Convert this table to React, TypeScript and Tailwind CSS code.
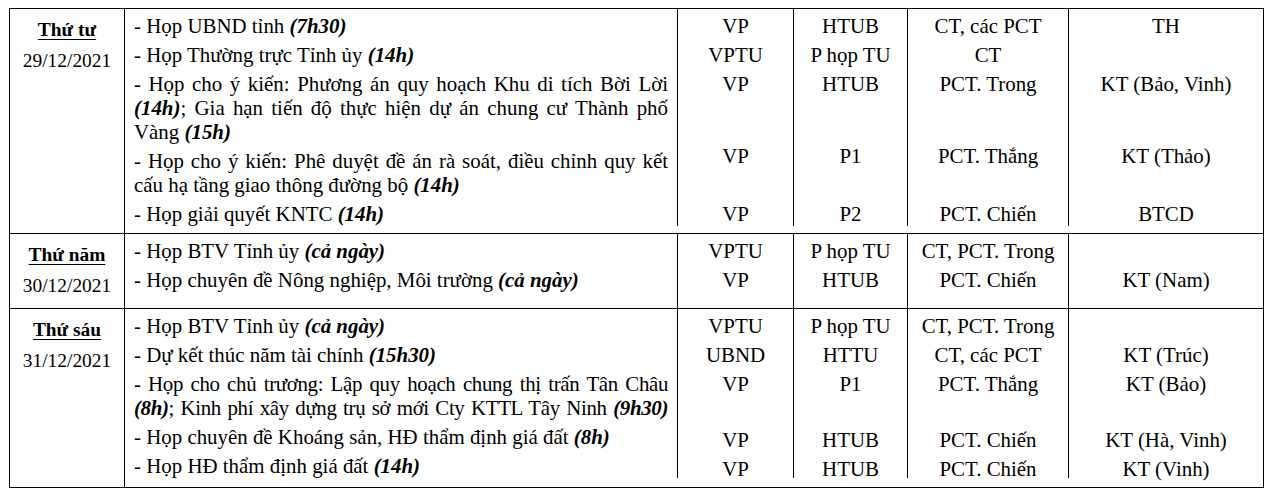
import React from "react";

type Seg = [string, boolean?];
type Item = {
  text: Seg[];
  cols: [string, string, string, string];
  justify?: boolean;
  tight?: boolean;
  shift?: "up" | "down";
};
type Group = { day: string; date: string; items: Item[]; lastPad: string };

const groups: Group[] = [
  {
    day: "Thứ tư",
    date: "29/12/2021",
    lastPad: "pb-[7px]",
    items: [
      { text: [["- Họp UBND tỉnh "], ["(7h30)", true]], cols: ["VP", "HTUB", "CT, các PCT", "TH"] },
      { text: [["- Họp Thường trực Tỉnh ủy "], ["(14h)", true]], cols: ["VPTU", "P họp TU", "CT", ""] },
      {
        text: [
          ["- Họp cho ý kiến: Phương án quy hoạch Khu di tích Bời Lời "],
          ["(14h)", true],
          ["; Gia hạn tiến độ thực hiện dự án chung cư Thành phố Vàng "],
          ["(15h)", true],
        ],
        cols: ["VP", "HTUB", "PCT. Trong", "KT (Bảo, Vinh)"],
        justify: true,
      },
      {
        text: [
          ["- Họp cho ý kiến: Phê duyệt đề án rà soát, điều chỉnh quy kết cấu hạ tầng giao thông đường bộ "],
          ["(14h)", true],
        ],
        cols: ["VP", "P1", "PCT. Thắng", "KT (Thảo)"],
        justify: true,
        shift: "up",
      },
      { text: [["- Họp giải quyết KNTC "], ["(14h)", true]], cols: ["VP", "P2", "PCT. Chiến", "BTCD"] },
    ],
  },
  {
    day: "Thứ năm",
    date: "30/12/2021",
    lastPad: "pb-[0px]",
    items: [
      { text: [["- Họp BTV Tỉnh ủy "], ["(cả ngày)", true]], cols: ["VPTU", "P họp TU", "CT, PCT. Trong", ""] },
      {
        text: [["- Họp chuyên đề Nông nghiệp, Môi trường "], ["(cả ngày)", true]],
        cols: ["VP", "HTUB", "PCT. Chiến", "KT (Nam)"],
      },
    ],
  },
  {
    day: "Thứ sáu",
    date: "31/12/2021",
    lastPad: "pb-[9px]",
    items: [
      { text: [["- Họp BTV Tỉnh ủy "], ["(cả ngày)", true]], cols: ["VPTU", "P họp TU", "CT, PCT. Trong", ""] },
      { text: [["- Dự kết thúc năm tài chính "], ["(15h30)", true]], cols: ["UBND", "HTTU", "CT, các PCT", "KT (Trúc)"] },
      {
        text: [
          ["- Họp cho chủ trương: Lập quy hoạch chung thị trấn Tân Châu "],
          ["(8h)", true],
          ["; Kinh phí xây dựng trụ sở mới Cty KTTL Tây Ninh "],
          ["(9h30)", true],
        ],
        cols: ["VP", "P1", "PCT. Thắng", "KT (Bảo)"],
        justify: true,
        tight: true,
      },
      {
        text: [["- Họp chuyên đề Khoáng sản, HĐ thẩm định giá đất "], ["(8h)", true]],
        cols: ["VP", "HTUB", "PCT. Chiến", "KT (Hà, Vinh)"],
        shift: "down",
      },
      {
        text: [["- Họp HĐ thẩm định giá đất "], ["(14h)", true]],
        cols: ["VP", "HTUB", "PCT. Chiến", "KT (Vinh)"],
        shift: "down",
      },
    ],
  },
];

function ItemRow({ item, last, lastPad }: { item: Item; last: boolean; lastPad: string }) {
  const rowCls = last ? `flex-1 ${lastPad}` : "";
  const sideTop = item.shift === "up" ? "pt-[0px]" : "pt-[5px]";
  const inner = item.shift === "down" ? "block translate-y-[3px]" : "block";
  return (
    <div className={`grid grid-cols-[553px_116px_114px_161px_194px] ${rowCls}`}>
      <div
        className={`border-r border-black px-[9px] pt-[5px] ${item.justify ? "text-justify" : ""} ${
          item.tight ? "tracking-[-0.35px] [text-align-last:justify]" : ""
        }`}
      >
        {item.text.map(([t, bi], i) =>
          bi ? (
            <span key={i} className="font-bold italic">
              {t}
            </span>
          ) : (
            <span key={i}>{t}</span>
          )
        )}
      </div>
      {item.cols.map((c, ci) => (
        <div key={ci} className={`${ci < 3 ? "border-r border-black" : ""} text-center ${sideTop}`}>
          <span className={inner}>{c}</span>
        </div>
      ))}
    </div>
  );
}

export default function App() {
  return (
    <div className="min-h-[497px] w-[1273px] bg-white pt-[8px] pl-[9px] text-black font-['Liberation_Serif','Times_New_Roman',serif]">
      <div className="w-[1255px] border border-black text-[20.9px] leading-[24px]">
        {groups.map((g, gi) => (
          <div key={gi} className={`flex ${gi < groups.length - 1 ? "border-b border-black" : ""}`}>
            <div className="w-[115px] shrink-0 border-r border-black pt-[9px] pb-[10px] text-center text-[19.4px]">
              <div className="font-bold underline underline-offset-[3px] decoration-1">{g.day}</div>
              <div className="mt-[7px]">{g.date}</div>
            </div>
            <div className="flex flex-1 flex-col">
              {g.items.map((it, ii) => (
                <ItemRow key={ii} item={it} last={ii === g.items.length - 1} lastPad={g.lastPad} />
              ))}
            </div>
          </div>
        ))}
      </div>
    </div>
  );
}
